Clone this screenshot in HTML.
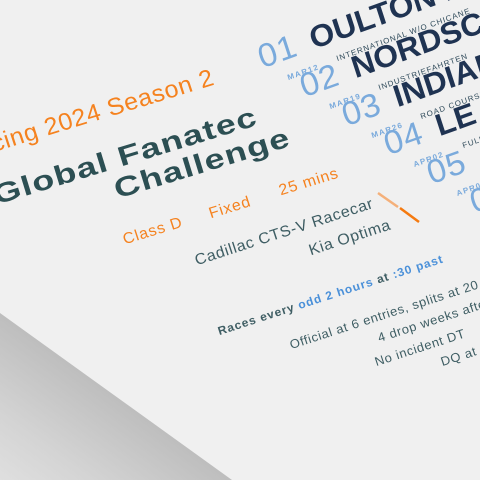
<!DOCTYPE html>
<html><head><meta charset="utf-8"><style>
html,body{margin:0;padding:0;width:480px;height:480px;overflow:hidden;background:#f0f0f0;}
body{position:relative;font-family:"Liberation Sans",sans-serif;}
.t{position:absolute;white-space:nowrap;line-height:1;transform-origin:0 100%;transform:matrix(0.94,-0.34,0.3,0.92,0,0);}
.l{transform:matrix(0.956,-0.292,0.3,0.92,0,0);}
.w{transform:matrix(1.147,-0.35,0.27,0.88,0,0);}
.k{transform:matrix(0.951,-0.309,0.3,0.92,0,0);}
.o{color:#f5821f}
.d{color:#2c4f53;font-weight:bold}
.n{color:#1f3352;font-weight:bold}
.b{color:#7aaadc}
.s{color:#2f4a5a;font-size:8px;letter-spacing:0.9px}
.m{color:#7aaadc;font-size:8px;font-weight:bold;letter-spacing:1.2px}
.g{color:#3e5d63}
.bl{color:#4a90d9}
</style></head><body>
<svg width="480" height="480" style="position:absolute;left:0;top:0">
<defs><linearGradient id="sh" x1="120" y1="396" x2="20" y2="535" gradientUnits="userSpaceOnUse">
<stop offset="0" stop-color="#bdbdbd"/><stop offset="0.5" stop-color="#d4d4d4"/><stop offset="1" stop-color="#e6e6e6"/></linearGradient></defs>
<polygon points="0,313 232,480 0,480" fill="url(#sh)"/>
<line x1="378" y1="193" x2="398" y2="207" stroke="#f4b07a" stroke-width="2.5"/>
<line x1="400" y1="208" x2="419" y2="222" stroke="#f57a10" stroke-width="2.5"/>
</svg>

<div class="t l o" style="left:-42px;top:143px;font-size:25px;letter-spacing:0.6px">iRacing 2024 Season 2</div>
<div class="t w d" style="left:-2px;top:180px;font-size:30px;letter-spacing:1px">Global Fanatec</div>
<div class="t w d" style="left:119px;top:174px;font-size:30px;letter-spacing:1px">Challenge</div>

<div class="t l o" style="left:126px;top:232px;font-size:16px;letter-spacing:0.8px">Class D</div>
<div class="t l o" style="left:212px;top:206px;font-size:16px;letter-spacing:0.8px">Fixed</div>
<div class="t l o" style="left:282px;top:183px;font-size:16px;letter-spacing:0.8px">25 mins</div>

<div class="t k g" style="left:198px;top:253px;font-size:16px;letter-spacing:0.6px">Cadillac CTS-V Racecar</div>
<div class="t k g" style="left:312px;top:243px;font-size:16px;letter-spacing:0.6px">Kia Optima</div>

<div class="t k g" style="left:220px;top:325px;font-size:12px;font-weight:bold;letter-spacing:0.9px">Races every <span class="bl">odd 2 hours</span> at <span class="bl">:30 past</span></div>
<div class="t k g" style="left:292px;top:338px;font-size:13px;letter-spacing:0.6px">Official at 6 entries, splits at 20</div>
<div class="t k g" style="left:380px;top:331px;font-size:13px;letter-spacing:0.6px">4 drop weeks after</div>
<div class="t k g" style="left:377px;top:355px;font-size:13px;letter-spacing:0.6px">No incident DT</div>
<div class="t k g" style="left:443px;top:355px;font-size:13px;letter-spacing:0.6px">DQ at</div>

<div class="t b" style="left:264px;top:40px;font-size:34px;letter-spacing:1px">01</div>
<div class="t n" style="left:315px;top:22px;font-size:32px">OULTON PARK</div>
<div class="t m" style="left:289px;top:74px">MAR12</div>
<div class="t s" style="left:338px;top:55px">INTERNATIONAL W/O CHICANE</div>

<div class="t b" style="left:306px;top:69px;font-size:34px;letter-spacing:1px">02</div>
<div class="t n" style="left:357px;top:51px;font-size:32px">NORDSCHLEIFE</div>
<div class="t m" style="left:331px;top:103px">MAR19</div>
<div class="t s" style="left:380px;top:84px">INDUSTRIEFAHRTEN</div>

<div class="t b" style="left:348px;top:98px;font-size:34px;letter-spacing:1px">03</div>
<div class="t n" style="left:399px;top:80px;font-size:32px">INDIANAPOLIS</div>
<div class="t m" style="left:373px;top:132px">MAR26</div>
<div class="t s" style="left:422px;top:113px">ROAD COURSE</div>

<div class="t b" style="left:390px;top:127px;font-size:34px;letter-spacing:1px">04</div>
<div class="t n" style="left:441px;top:109px;font-size:32px">LE MANS</div>
<div class="t m" style="left:415px;top:161px">APR02</div>
<div class="t s" style="left:464px;top:142px">FULL</div>

<div class="t b" style="left:433px;top:156px;font-size:34px;letter-spacing:1px">05</div>
<div class="t m" style="left:458px;top:190px">APR09</div>
<div class="t b" style="left:476px;top:185px;font-size:34px">06</div>
</body></html>
